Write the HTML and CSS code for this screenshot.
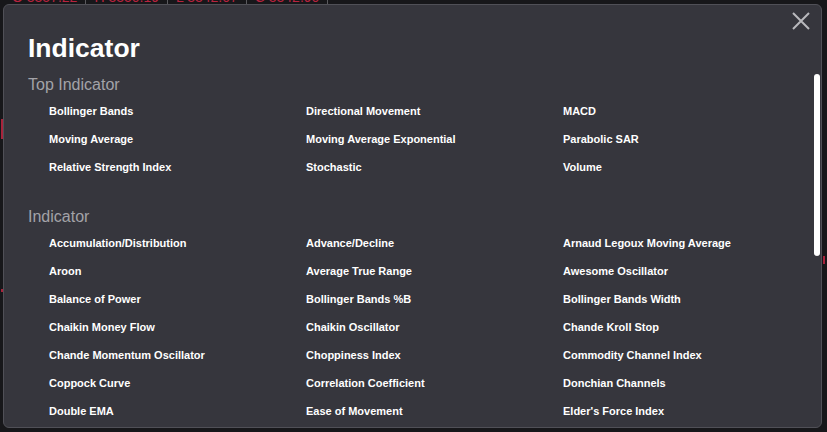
FILE: index.html
```html
<!DOCTYPE html>
<html>
<head>
<meta charset="utf-8">
<link rel="stylesheet" href="styles.css">
</head>
<body>
<div class="chart">
  <div class="ticker">
    <span class="tick">O 3357.22</span>
    <span class="tick">H 3350.19</span>
    <span class="tick">L 3342.07</span>
    <span class="tick">C 3342.90</span>
  </div>
  <div class="candle c1"></div>
  <div class="candle c2"></div>
  <div class="candle c3"></div>
</div>

<div class="modal">
  <button class="close" aria-label="Close">
    <svg width="20" height="20" viewBox="0 0 20 20"><path d="M2 2 L18 18 M18 2 L2 18" stroke="#b9b9bd" stroke-width="2" fill="none"/></svg>
  </button>
  <h1 class="title">Indicator</h1>
  <section class="group group-first">
    <h2 class="group-title">Top Indicator</h2>
    <ul class="items">
      <li>Bollinger Bands</li>
      <li>Directional Movement</li>
      <li>MACD</li>
      <li>Moving Average</li>
      <li>Moving Average Exponential</li>
      <li>Parabolic SAR</li>
      <li>Relative Strength Index</li>
      <li>Stochastic</li>
      <li>Volume</li>
    </ul>
  </section>
  <section class="group group-second">
    <h2 class="group-title">Indicator</h2>
    <ul class="items">
      <li>Accumulation/Distribution</li>
      <li>Advance/Decline</li>
      <li>Arnaud Legoux Moving Average</li>
      <li>Aroon</li>
      <li>Average True Range</li>
      <li>Awesome Oscillator</li>
      <li>Balance of Power</li>
      <li>Bollinger Bands %B</li>
      <li>Bollinger Bands Width</li>
      <li>Chaikin Money Flow</li>
      <li>Chaikin Oscillator</li>
      <li>Chande Kroll Stop</li>
      <li>Chande Momentum Oscillator</li>
      <li>Choppiness Index</li>
      <li>Commodity Channel Index</li>
      <li>Coppock Curve</li>
      <li>Correlation Coefficient</li>
      <li>Donchian Channels</li>
      <li>Double EMA</li>
      <li>Ease of Movement</li>
      <li>Elder's Force Index</li>
    </ul>
  </section>
  <div class="scroll-thumb"></div>
</div>
</body>
</html>
```

FILE: styles.css
```css
html, body {
  margin: 0;
  padding: 0;
  width: 827px;
  height: 432px;
  overflow: hidden;
  background: #17171a;
  font-family: "Liberation Sans", Arial, sans-serif;
}

.chart {
  position: relative;
  width: 827px;
  height: 432px;
}

.ticker {
  display: flex;
  margin-top: -11px;
  padding-left: 4px;
}

.tick {
  color: #b8233f;
  font-size: 14px;
  line-height: 16px;
  padding: 0 8px;
  border-right: 1px solid #5a5a5e;
}

.candle {
  position: absolute;
  width: 2px;
  background: #a8243c;
}
.c1 { left: 1px; top: 130px; height: 20px; }
.c2 { left: 1px; top: 300px; height: 3px; }
.c3 { left: 823px; top: 267px; height: 8px; }

.modal {
  position: absolute;
  left: 3px;
  top: 4px;
  width: 769px;
  height: 422px;
  background: #36363d;
  border: 1px solid #505057;
  border-radius: 6px;
  padding: 0 24px;
  box-sizing: content-box;
  overflow: hidden;
}

.close {
  position: absolute;
  right: 10px;
  top: 6px;
  width: 20px;
  height: 20px;
  padding: 0;
  border: 0;
  background: none;
}
.close svg { display: block; }

.title {
  margin: 28px 0 0;
  font-size: 26.5px;
  line-height: 30px;
  font-weight: bold;
  color: #ffffff;
}

.group-title {
  margin: 0;
  font-size: 16px;
  line-height: 20px;
  font-weight: normal;
  color: #a3a3a8;
}

.group-first .group-title {
  margin-top: 12px;
}

.group-second {
  margin-top: 26px;
}

.items {
  list-style: none;
  margin: 2px 0 0;
  padding: 0 0 0 21px;
  display: grid;
  grid-template-columns: 257px 257px 257px;
  grid-auto-rows: 28px;
}

.items li {
  color: #ffffff;
  font-size: 11px;
  font-weight: bold;
  line-height: 28px;
  white-space: nowrap;
}

.scroll-thumb {
  position: absolute;
  right: 1px;
  top: 69px;
  width: 6px;
  height: 182px;
  background: #ffffff;
  border-radius: 3px;
}
```
